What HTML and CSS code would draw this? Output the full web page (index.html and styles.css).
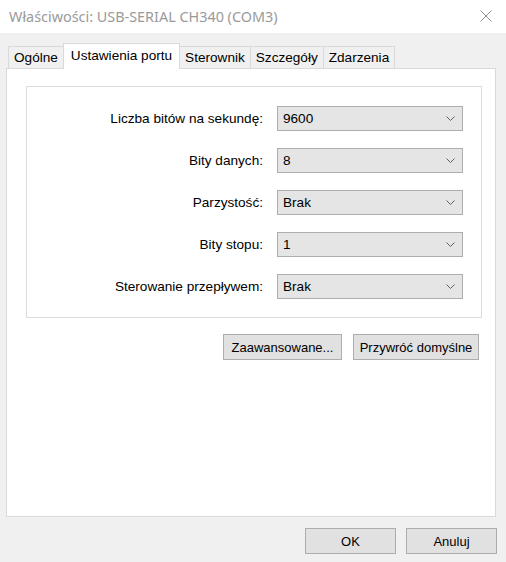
FILE: index.html
```html
<!DOCTYPE html>
<html lang="pl">
<head>
  <meta charset="UTF-8">
  <title>Właściwości: USB-SERIAL CH340 (COM3)</title>
  <link rel="stylesheet" href="styles.css">
</head>
<body>
  <div id="window">
    <div class="titlebar">
      <span class="title">Właściwości: USB-SERIAL CH340 (COM3)</span>
      <span class="close">
        <svg width="12" height="12" viewBox="0 0 12 12"><path d="M0.5 0.5L11.5 11.5M11.5 0.5L0.5 11.5" stroke="#8c8c8c" stroke-width="1" fill="none"/></svg>
      </span>
    </div>
    <div class="tabs">
      <div class="tab">Ogólne</div>
      <div class="tab active">Ustawienia portu</div>
      <div class="tab">Sterownik</div>
      <div class="tab">Szczegóły</div>
      <div class="tab">Zdarzenia</div>
    </div>
    <div class="panel">
      <div class="group">
        <label>Liczba bitów na sekundę:</label>
        <div class="combo">9600<svg width="9" height="5" viewBox="0 0 9 5"><polyline points="0.5,0.5 4.5,4.5 8.5,0.5" stroke="#606060" fill="none"/></svg></div>
        <label>Bity danych:</label>
        <div class="combo">8<svg width="9" height="5" viewBox="0 0 9 5"><polyline points="0.5,0.5 4.5,4.5 8.5,0.5" stroke="#606060" fill="none"/></svg></div>
        <label>Parzystość:</label>
        <div class="combo">Brak<svg width="9" height="5" viewBox="0 0 9 5"><polyline points="0.5,0.5 4.5,4.5 8.5,0.5" stroke="#606060" fill="none"/></svg></div>
        <label>Bity stopu:</label>
        <div class="combo">1<svg width="9" height="5" viewBox="0 0 9 5"><polyline points="0.5,0.5 4.5,4.5 8.5,0.5" stroke="#606060" fill="none"/></svg></div>
        <label>Sterowanie przepływem:</label>
        <div class="combo">Brak<svg width="9" height="5" viewBox="0 0 9 5"><polyline points="0.5,0.5 4.5,4.5 8.5,0.5" stroke="#606060" fill="none"/></svg></div>
      </div>
      <div class="actions">
        <button class="btn adv">Zaawansowane...</button>
        <button class="btn defaults">Przywróć domyślne</button>
      </div>
    </div>
    <div class="footer">
      <button class="btn wide">OK</button>
      <button class="btn wide">Anuluj</button>
    </div>
  </div>
</body>
</html>
```
FILE: styles.css
```css
html, body {
  margin: 0;
  padding: 0;
}
body {
  background: #f0f0f0;
  font-family: "Liberation Sans", Arial, sans-serif;
  font-size: 13.6px;
  color: #000;
}
#window {
  width: 506px;
  height: 562px;
  overflow: hidden;
}
.titlebar {
  height: 33px;
  background: #fff;
  display: flex;
  align-items: center;
  justify-content: space-between;
  padding-left: 9px;
}
.title {
  font-family: "Noto Sans", sans-serif;
  font-size: 14.4px;
  color: #9a9a9a;
  margin-top: -1px;
}
.close {
  width: 40px;
  display: flex;
  justify-content: center;
  margin-top: -2px;
}
.tabs {
  display: flex;
  align-items: flex-end;
  height: 25px;
  margin-top: 10px;
  padding-left: 8px;
}
.tab {
  height: 22px;
  box-sizing: border-box;
  border: 1px solid #d9d9d9;
  border-bottom: none;
  margin-left: -1px;
  padding: 3px 5px 0;
  background: #f0f0f0;
  white-space: nowrap;
}
.tab:first-child {
  margin-left: 0;
}
.tab.active {
  height: 26px;
  margin-bottom: -1px;
  background: #fff;
  padding: 4px 7px 0;
  position: relative;
  z-index: 1;
}
.panel {
  margin-left: 6px;
  width: 490px;
  height: 449px;
  box-sizing: border-box;
  border: 1px solid #d9d9d9;
  background: #fff;
  padding: 17px 13px 0 19px;
}
.group {
  border: 1px solid #dcdcdc;
  display: grid;
  grid-template-columns: 236px 186px;
  column-gap: 14px;
  row-gap: 17px;
  padding: 19px 0 18px;
  align-items: center;
}
.group label {
  text-align: right;
  white-space: nowrap;
}
.combo {
  height: 25px;
  box-sizing: border-box;
  border: 1px solid #adadad;
  background: #e5e5e5;
  display: flex;
  align-items: center;
  justify-content: space-between;
  padding: 0 7px 0 5px;
}
.actions {
  display: flex;
  justify-content: flex-end;
  gap: 11px;
  margin-top: 16px;
  padding-right: 3px;
}
.btn {
  font-family: "Liberation Sans", Arial, sans-serif;
  font-size: 13px;
  color: #000;
  height: 26px;
  box-sizing: border-box;
  border: 1px solid #adadad;
  background: #e1e1e1;
  padding: 0;
  margin: 0;
}
.adv {
  width: 119px;
}
.defaults {
  width: 126px;
}
.footer {
  display: flex;
  justify-content: flex-end;
  gap: 10px;
  margin-top: 11px;
  padding-right: 9px;
}
.wide {
  width: 91px;
}
```
